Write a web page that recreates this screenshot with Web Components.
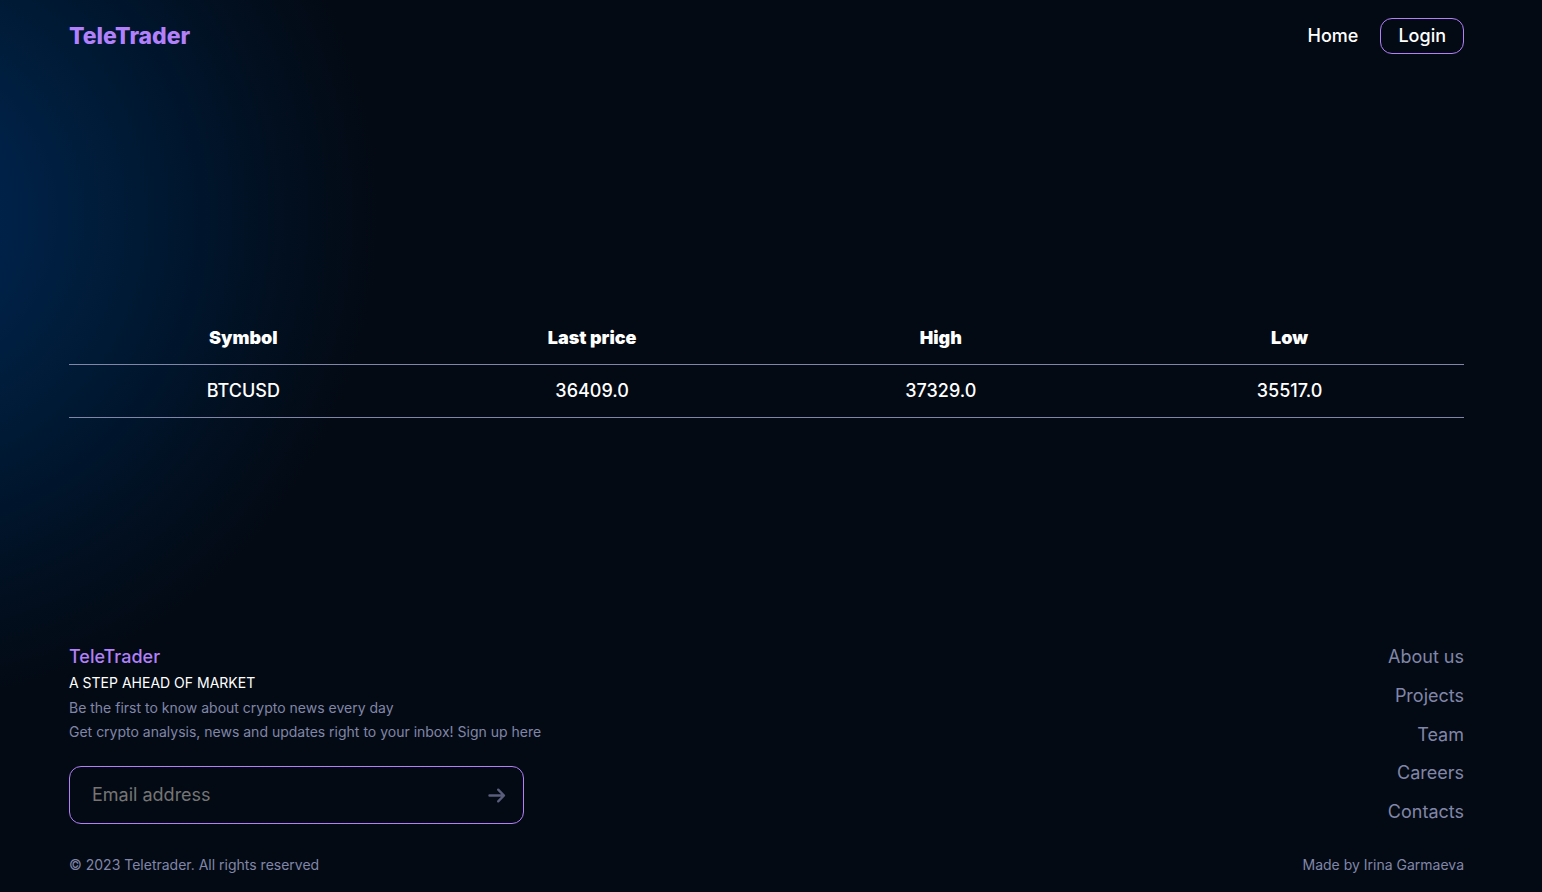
<!DOCTYPE html>
<html lang="en">
<head>
<meta charset="utf-8">
<meta name="viewport" content="width=device-width, initial-scale=1">
<title>TeleTrader</title>
<style>
  html { background: #030b15; }
  body {
    margin: 0;
    font-family: Inter, "Liberation Sans", sans-serif;
    font-size: 18px;
    line-height: 24px;
    color: #fff;
    --accent: #b180fa;
    --muted: #8186a8;
  }
</style>
</head>
<body>
<tt-app>
  <tt-header slot="header"></tt-header>
  <tt-ticker></tt-ticker>
  <tt-footer slot="footer">
    <tt-subscribe slot="subscribe"></tt-subscribe>
  </tt-footer>
</tt-app>

<script>
class TtElement extends HTMLElement {
  constructor() {
    super();
    const t = document.createElement('template');
    t.innerHTML = this.constructor.markup;
    this.attachShadow({ mode: 'open' }).append(t.content.cloneNode(true));
  }
}

customElements.define('tt-app', class extends TtElement {
  static markup = `
    <style>
      :host {
        display: flex; flex-direction: column; box-sizing: border-box;
        min-height: 100vh; padding: 0 78px 0 69px;
        background: radial-gradient(490px 490px at -112px 215px,
          #00264c 0%, #002147 25%, #001c39 45%, #00152c 64%, #020f1f 82%, #030a14 100%);
      }
      main { flex: 1; display: grid; align-items: center; padding-top: 12px; }
    </style>
    <slot name="header"></slot>
    <main><slot></slot></main>
    <slot name="footer"></slot>`;
});

customElements.define('tt-header', class extends TtElement {
  static markup = `
    <style>
      :host { display: block; }
      header { display: flex; justify-content: space-between; align-items: center; height: 72px; }
      nav { display: flex; align-items: center; gap: 22px; font-weight: 500; }
      a { color: inherit; text-decoration: none; }
      .logo { color: var(--accent); font-size: 23px; font-weight: 800; }
      button {
        font: inherit; color: inherit; background: none; cursor: pointer;
        border: 1px solid var(--accent); border-radius: 12px; padding: 5px 17px;
      }
    </style>
    <header>
      <a class="logo" href="#">TeleTrader</a>
      <nav><a href="#">Home</a><button type="button">Login</button></nav>
    </header>`;
});

customElements.define('tt-ticker', class extends TtElement {
  static markup = `
    <style>
      :host { display: block; }
      table { width: 100%; table-layout: fixed; border-collapse: collapse; text-align: center; }
      th, td { height: 52px; padding: 0; border-bottom: 1px solid #8186a8; font-weight: 500; }
      th { font-weight: 900; }
    </style>
    <table>
      <thead><tr><th>Symbol</th><th>Last price</th><th>High</th><th>Low</th></tr></thead>
      <tbody><tr><td>BTCUSD</td><td>36409.0</td><td>37329.0</td><td>35517.0</td></tr></tbody>
    </table>`;
});

customElements.define('tt-footer', class extends TtElement {
  static markup = `
    <style>
      :host { display: block; color: var(--muted); }
      .top, .bottom { display: flex; justify-content: space-between; }
      .bottom { padding: 29px 0 15px; font-size: 14px; }
      p { margin: 0; font-size: 14px; }
      .brand { display: block; color: var(--accent); font-weight: 500; margin-bottom: 2px; text-decoration: none; }
      .tag { color: #fff; margin-bottom: 1px; }
      ul { list-style: none; margin: 0; padding: 0; display: grid; align-content: space-between; text-align: right; }
      li a { color: inherit; text-decoration: none; }
    </style>
    <footer>
      <div class="top">
        <div>
          <a class="brand" href="#">TeleTrader</a>
          <p class="tag">A STEP AHEAD OF MARKET</p>
          <p>Be the first to know about crypto news every day</p>
          <p>Get crypto analysis, news and updates right to your inbox! Sign up here</p>
          <slot name="subscribe"></slot>
        </div>
        <ul>
          <li><a href="#">About us</a></li>
          <li><a href="#">Projects</a></li>
          <li><a href="#">Team</a></li>
          <li><a href="#">Careers</a></li>
          <li><a href="#">Contacts</a></li>
        </ul>
      </div>
      <div class="bottom"><span>© 2023 Teletrader. All rights reserved</span><span>Made by Irina Garmaeva</span></div>
    </footer>`;
});

customElements.define('tt-subscribe', class extends TtElement {
  static markup = `
    <style>
      :host { display: block; margin-top: 22px; max-width: 455px; }
      form {
        display: flex; align-items: center; box-sizing: border-box; height: 58px;
        border: 1px solid var(--accent); border-radius: 12px; padding: 0 14px 0 22px;
      }
      input {
        flex: 1; min-width: 0; border: 0; padding: 0; outline: 0; background: none;
        font: inherit; color: #fff;
      }
      input::placeholder { color: #757575; }
      button { display: flex; border: 0; padding: 0; background: none; color: #5a5d7c; cursor: pointer; }
    </style>
    <form>
      <input type="email" placeholder="Email address" aria-label="Email address">
      <button type="button" aria-label="Subscribe">
        <svg width="24" height="24" viewBox="0 0 24 24" fill="none" stroke="currentColor" stroke-width="2.4" stroke-linecap="round" stroke-linejoin="round">
          <path d="M4.5 12.5H18.6M13.2 6.7L19 12.5L13.2 18.3"/>
        </svg>
      </button>
    </form>`;
});
</script>
</body>
</html>
